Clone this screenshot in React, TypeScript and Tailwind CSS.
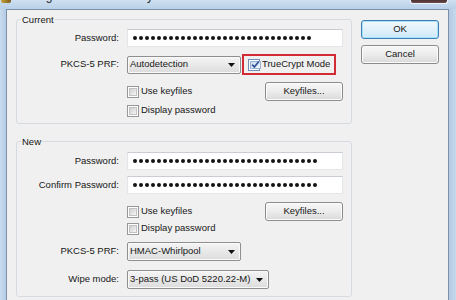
import React from "react";

function Dots({ n }: { n: number }) {
  return (
    <div className="flex items-center gap-[2px]">
      {Array.from({ length: n }).map((_, i) => (
        <span key={i} className="block w-[4px] h-[4px] rounded-full bg-[#141414]" />
      ))}
    </div>
  );
}

function Field({ label, dots }: { label: string; dots: number }) {
  return (
    <div className="flex items-center h-[18px]">
      <div className="w-[102px] text-right">{label}</div>
      <div className="ml-[8px] w-[216px] h-[18px] bg-white border border-[#e2e5ea] border-t-[#c9ccd2] flex items-center pl-[5px]">
        <Dots n={dots} />
      </div>
    </div>
  );
}

function Check({ checked }: { checked?: boolean }) {
  if (checked) {
    return (
      <span className="flex shrink-0 w-[12px] h-[12px] border border-[#6f8db8] bg-white p-[1px]">
        <span className="flex-1 flex items-center justify-center bg-gradient-to-br from-[#c9daef] to-[#f2f7fd] border border-[#9bb4d6]">
          <svg width="9" height="9" viewBox="0 0 9 9">
            <path d="M1.2 4.6 L3.4 7 L7.8 1.6" stroke="#2b4d90" strokeWidth="1.6" fill="none" />
          </svg>
        </span>
      </span>
    );
  }
  return (
    <span className="flex shrink-0 w-[12px] h-[12px] border border-[#979797] bg-white p-[1px]">
      <span className="flex-1 bg-gradient-to-br from-[#cfcfcf] to-[#f5f5f5] border border-[#c2c2c2]" />
    </span>
  );
}

function CheckRow({ label, checked }: { label: string; checked?: boolean }) {
  return (
    <div className="flex items-center gap-[2px]">
      <Check checked={checked} />
      <span className="whitespace-nowrap">{label}</span>
    </div>
  );
}

function Btn({ children, primary }: { children: React.ReactNode; primary?: boolean }) {
  if (primary) {
    return (
      <div className="w-[78px] h-[19px] rounded-[3px] border border-[#3d7fb4] bg-gradient-to-b from-[#f0f8fd] via-[#e2f2fb] to-[#cce8f7] shadow-[inset_0_0_0_1px_#a9e2fb] flex items-center justify-center">
        {children}
      </div>
    );
  }
  return (
    <div className="w-[78px] h-[19px] rounded-[3px] border border-[#8c8c8c] bg-gradient-to-b from-[#f7f7f7] via-[#ececec] to-[#d9d9d9] shadow-[inset_0_0_0_1px_#fbfbfb] flex items-center justify-center">
      {children}
    </div>
  );
}

function Select({ value, kind }: { value: string; kind: "prf1" | "prf2" | "wipe" }) {
  const base =
    "rounded-[2px] border border-[#8f8f8f] bg-gradient-to-b from-[#f5f5f5] to-[#dcdcdc] flex items-center justify-between pl-[2px] pr-[5px] shadow-[inset_0_0_0_1px_#fafafa] ";
  const size =
    kind === "prf1" ? "w-[114px] h-[18px]" : kind === "prf2" ? "w-[114px] h-[19px]" : "w-[142px] h-[19px]";
  return (
    <div className={base + size}>
      <span className="whitespace-nowrap">{value}</span>
      <svg width="7" height="4" viewBox="0 0 7 4" className="shrink-0">
        <path d="M0 0H7L3.5 4Z" fill="#111" />
      </svg>
    </div>
  );
}

function LabelRow({ label, children, h }: { label: string; children: React.ReactNode; h: string }) {
  return (
    <div className={"flex items-center " + h}>
      <div className="w-[102px] text-right">{label}</div>
      <div className="ml-[8px] flex items-center">{children}</div>
    </div>
  );
}

export default function App() {
  return (
    <div className="w-[456px] h-[300px] overflow-hidden bg-[#bdd3ea] font-['Liberation_Sans',Arial,sans-serif] text-[9.5px] text-[#161616] flex flex-col">
      {/* title bar */}
      <div className="h-[9px] shrink-0 overflow-hidden bg-gradient-to-b from-[#cfe0f1] to-[#b9d0e8] flex items-start">
        <div className="w-[10px] h-[3px] ml-[1px] bg-gradient-to-r from-[#c9a43a] to-[#7a5a1c] rounded-b-[2px]" />
        <div className="ml-[6px] -mt-[10px] text-[12px] leading-[13px] text-[#1b1b1b] whitespace-nowrap">
          Change Password or Keyfiles
        </div>
        <div className="flex-1" />
        <div className="mr-[8px] w-[38px] h-[4px] rounded-b-[3px] border border-t-0 border-[#eef3f9] bg-gradient-to-b from-[#4a3434] to-[#6e4a48]" />
      </div>
      <div className="flex flex-1">
        <div className="w-[6px] shrink-0 bg-gradient-to-r from-[#c8dbef] to-[#b4cbe4]" />
        <div className="w-[443px] shrink-0 border border-b-0 border-[#7c91a7] bg-[#f0f0f0] flex">
          {/* left groups */}
          <div className="pl-[9px] pt-[3px] flex flex-col">
            <fieldset className="w-[336px] border border-[#d5dbe0] rounded-[3px] pb-[6px]">
              <legend className="ml-[4px] px-[1px] leading-[13px]">Current</legend>
              <div className="mt-[3px]">
                <Field label="Password:" dots={30} />
              </div>
              <div className="mt-[7px]">
                <LabelRow label="PKCS-5 PRF:" h="h-[21px]">
                  <Select value="Autodetection" kind="prf1" />
                  <div className="ml-[1px] w-[94px] h-[21px] border-2 border-[#d32b35] flex items-center pl-[4px]">
                    <CheckRow label="TrueCrypt Mode" checked />
                  </div>
                </LabelRow>
              </div>
              <div className="mt-[7px] flex items-center h-[19px] pl-[110px] pr-[8px]">
                <CheckRow label="Use keyfiles" />
                <div className="ml-auto">
                  <Btn>Keyfiles...</Btn>
                </div>
              </div>
              <div className="mt-[3px] flex items-center h-[13px] pl-[110px]">
                <CheckRow label="Display password" />
              </div>
            </fieldset>

            <fieldset className="mt-[11px] w-[336px] border border-[#d5dbe0] rounded-[3px] pb-[7px]">
              <legend className="ml-[4px] px-[1px] leading-[13px]">New</legend>
              <div className="mt-[4px]">
                <Field label="Password:" dots={31} />
              </div>
              <div className="mt-[6px]">
                <Field label="Confirm Password:" dots={31} />
              </div>
              <div className="mt-[8px] flex items-center h-[19px] pl-[110px] pr-[8px]">
                <CheckRow label="Use keyfiles" />
                <div className="ml-auto">
                  <Btn>Keyfiles...</Btn>
                </div>
              </div>
              <div className="mt-[1px] flex items-center h-[13px] pl-[110px]">
                <CheckRow label="Display password" />
              </div>
              <div className="mt-[7px]">
                <LabelRow label="PKCS-5 PRF:" h="h-[19px]">
                  <Select value="HMAC-Whirlpool" kind="prf2" />
                </LabelRow>
              </div>
              <div className="mt-[9px]">
                <LabelRow label="Wipe mode:" h="h-[19px]">
                  <Select value="3-pass (US DoD 5220.22-M)" kind="wipe" />
                </LabelRow>
              </div>
            </fieldset>
          </div>
          {/* buttons */}
          <div className="ml-[9px] pt-[10px] flex flex-col gap-[6px]">
            <Btn primary>OK</Btn>
            <Btn>Cancel</Btn>
          </div>
        </div>
        <div className="w-[7px] shrink-0 bg-gradient-to-r from-[#b4cbe4] to-[#c6d9ed]" />
      </div>
    </div>
  );
}
